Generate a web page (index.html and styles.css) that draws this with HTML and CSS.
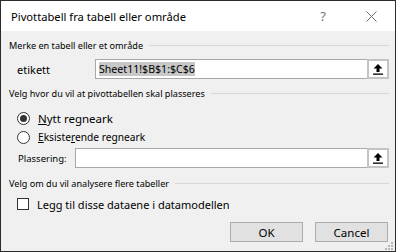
FILE: index.html
```html
<!DOCTYPE html>
<html>
<head>
<meta charset="utf-8">
<link rel="stylesheet" href="styles.css">
</head>
<body>
<div class="dialog">
  <div class="titlebar">
    <span class="title">Pivottabell fra tabell eller område</span>
    <span class="help">?</span>
    <svg class="close" width="11" height="11" viewBox="0 0 11 11"><path d="M0.5 0.5 L10.5 10.5 M10.5 0.5 L0.5 10.5" stroke="#6d6d6d" stroke-width="1" fill="none"/></svg>
  </div>
  <div class="body">
    <div class="group g1"><span class="glabel">Merke en tabell eller et område</span><span class="gline"></span></div>
    <div class="row r-etikett">
      <span class="lbl-etikett">etikett</span>
      <div class="refedit">
        <span class="reftext"><span class="sel">Sheet11!$B$1:$C$6</span></span>
        <span class="refbtn"><svg width="10" height="11" viewBox="0 0 10 11"><path d="M5 0 L0.5 4.5 L3.5 4.5 L3.5 8 L6.5 8 L6.5 4.5 L9.5 4.5 Z" fill="#000"/><rect x="0" y="9.5" width="10" height="1.3" fill="#000"/></svg></span>
      </div>
    </div>
    <div class="group g2"><span class="glabel">Velg hvor du vil at pivottabellen skal plasseres</span><span class="gline"></span></div>
    <div class="row radio r1"><span class="rcircle on"><span class="dot"></span></span><span class="rtext big"><u>N</u>ytt regneark</span></div>
    <div class="row radio r2"><span class="rcircle"></span><span class="rtext small"><u>E</u>ksiste<u>r</u>ende regneark</span></div>
    <div class="row r-plass">
      <span class="lbl-plass">Plassering:</span>
      <div class="refedit">
        <span class="reftext"></span>
        <span class="refbtn"><svg width="10" height="11" viewBox="0 0 10 11"><path d="M5 0 L0.5 4.5 L3.5 4.5 L3.5 8 L6.5 8 L6.5 4.5 L9.5 4.5 Z" fill="#000"/><rect x="0" y="9.5" width="10" height="1.3" fill="#000"/></svg></span>
      </div>
    </div>
    <div class="group g3"><span class="glabel">Velg om du vil analysere flere tabeller</span><span class="gline"></span></div>
    <div class="row check"><span class="cbox"></span><span class="rtext chk">Legg til disse dataene i datamodellen</span></div>
    <div class="row buttons"><span class="btn">OK</span><span class="btn">Cancel</span></div>
  </div>
  <svg class="grip" width="8" height="8" viewBox="0 0 8 8" fill="#b8b8b8"><rect x="6" y="0" width="2" height="2"/><rect x="3" y="3" width="2" height="2"/><rect x="6" y="3" width="2" height="2"/><rect x="0" y="6" width="2" height="2"/><rect x="3" y="6" width="2" height="2"/><rect x="6" y="6" width="2" height="2"/></svg>
</div>
</body>
</html>
```

FILE: styles.css
```css
html, body { margin: 0; padding: 0; }
body { font-family: "Noto Sans", "Liberation Sans", sans-serif; color: #000; }
.dialog {
  position: relative;
  width: 396px; height: 252px; box-sizing: border-box;
  border: 1px solid #2b2b2b;
  background: #f0f0f0;
  display: flex; flex-direction: column;
}
.titlebar {
  height: 30px; background: #fff;
  display: flex; align-items: center;
}
.title { font-size: 11.2px; margin-left: 10px; flex: 1; }
.help { font-size: 13px; color: #777; margin-right: 40px; }
.close { margin-right: 18px; }
.body { flex: 1; padding: 7px 6px 0 8px; display: flex; flex-direction: column; }
.group { height: 14px; display: flex; align-items: center; }
.glabel { font-size: 9.1px; white-space: nowrap; }
.gline { flex: 1; height: 1px; background: #d7d7d7; margin-left: 6px; }
.g2 { margin-top: 7px; }
.g3 { margin-top: 8px; }
.row { display: flex; align-items: center; }
.r-etikett { margin-top: 7px; height: 20px; }
.lbl-etikett { font-size: 11px; width: 86px; padding-left: 8px; box-sizing: border-box; }
.refedit { flex: 1; height: 20px; box-sizing: border-box; border: 1px solid #a8a8a8; background: #fff; display: flex; }
.reftext { flex: 1; display: flex; align-items: center; padding-left: 3px; font-size: 10.6px; }
.sel { background: #c8c8c8; line-height: 14px; }
.refbtn { width: 22px; box-sizing: border-box; border: 2px solid #c4c4c4; background: #fff; display: flex; align-items: center; justify-content: center; margin: -1px -1px -1px 0; }
.radio { height: 18px; }
.r1 { margin-top: 9px; }
.r2 { margin-top: 1px; }
.rcircle { width: 11px; height: 11px; border: 1px solid #333; border-radius: 50%; background: #fff; margin-left: 8px; display: flex; align-items: center; justify-content: center; }
.dot { width: 7px; height: 7px; background: #333; border-radius: 50%; }
.rtext { margin-left: 8px; white-space: nowrap; }
.big { font-size: 11.5px; }
.chk { font-size: 11px; }
.small { font-size: 10.2px; }
.r-plass { margin-top: 2px; height: 20px; }
.lbl-plass { font-size: 9.5px; width: 66px; padding-left: 9px; box-sizing: border-box; }
.check { margin-top: 5px; height: 18px; }
.cbox { width: 12px; height: 12px; box-sizing: border-box; border: 1px solid #333; background: #fff; margin-left: 8px; }
.buttons { margin-top: 9px; height: 20px; justify-content: flex-end; gap: 12px; padding-right: 1px; }
.btn { width: 73px; height: 20px; box-sizing: border-box; border: 1px solid #adadad; background: #e1e1e1; font-size: 11.5px; display: flex; align-items: center; justify-content: center; }
.grip { position: absolute; right: 2px; bottom: 1px; }
```
